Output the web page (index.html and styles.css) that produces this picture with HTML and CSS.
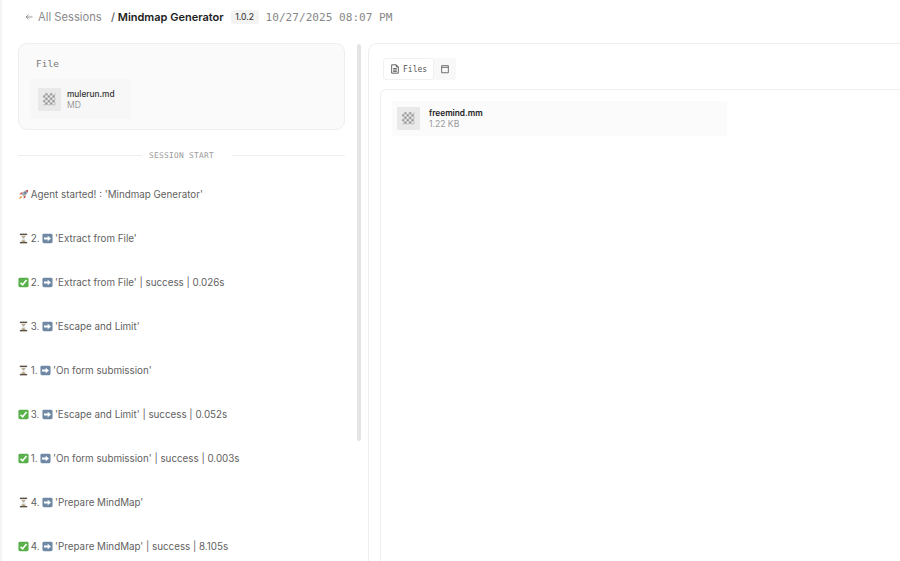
FILE: index.html
```html
<!DOCTYPE html>
<html lang="en">
<head>
<meta charset="utf-8">
<title>Mindmap Generator</title>
<link rel="stylesheet" href="styles.css">
</head>
<body>
<svg class="defs" width="0" height="0" aria-hidden="true">
  <defs>
    <pattern id="chk" width="5" height="5" patternUnits="userSpaceOnUse">
      <rect width="5" height="5" fill="#8f8f8f"/>
      <rect width="2.500" height="2.500" fill="#f5f5f5"/>
      <rect x="2.500" y="2.500" width="2.500" height="2.500" fill="#f5f5f5"/>
    </pattern>
    <symbol id="thumb" viewBox="0 0 24 24">
      <rect width="24" height="24" fill="#e9e9e9"/>
      <rect x="5.500" y="5.500" width="12.500" height="12.500" fill="url(#chk)"/>
    </symbol>
    <symbol id="rocket" viewBox="0 0 12 12">
      <path d="M11 1C8 1 5.500 2.500 3.800 5.600L6.400 8.200C9.500 6.500 11 4 11 1Z" fill="#a9adb8"/>
      <path d="M11 1C10 1 9 1.200 8.200 1.500L10.500 3.800C10.800 3 11 2 11 1Z" fill="#c9483e"/>
      <path d="M3.800 5.600L1.500 6L3 4C3.500 3.700 4.500 3.700 5 3.800Z" fill="#c9483e"/>
      <path d="M6.400 8.200L6 10.500L8 9C8.300 8.500 8.300 7.500 8.200 7Z" fill="#c9483e"/>
      <path d="M3.500 7.500C2.300 8 1.500 9.500 1 11C2.500 10.500 4 9.700 4.500 8.500Z" fill="#e9a13b"/>
      <circle cx="7.800" cy="4.200" r="1" fill="#4f6f8f"/>
    </symbol>
    <symbol id="hourglass" viewBox="0 0 12 12">
      <rect x="2" y=".7" width="8" height="1.500" fill="#5e5044"/>
      <rect x="2" y="9.800" width="8" height="1.500" fill="#5e5044"/>
      <path d="M3 2.200H9C9 4.200 7.300 5.300 6.700 6C7.300 6.700 9 7.800 9 9.800H3C3 7.800 4.700 6.700 5.300 6C4.700 5.300 3 4.200 3 2.200Z" fill="#dfe3e6"/>
      <path d="M4 3.500H8C7.600 4.600 6.500 5.200 6 5.800C5.500 5.200 4.400 4.600 4 3.500ZM3.800 9.800C4.200 8.600 5.300 8 6 7.600C6.700 8 7.800 8.600 8.200 9.800Z" fill="#b8a27e"/>
    </symbol>
    <symbol id="arrowbox" viewBox="0 0 12 12">
      <rect x=".5" y=".8" width="11" height="10.400" rx="1.600" fill="#6f88a3"/>
      <path d="M2.200 4.900H6.200V2.900L9.800 6L6.200 9.100V7.100H2.200Z" fill="#fff"/>
    </symbol>
    <symbol id="check" viewBox="0 0 12 12">
      <rect x=".5" y=".8" width="11" height="10.400" rx="1.600" fill="#58b04a"/>
      <path d="M2.800 6.200L5 8.500L9.300 3.300" fill="none" stroke="#fff" stroke-width="1.700"/>
    </symbol>
  </defs>
</svg>

<div class="page">
  <header class="topbar">
    <a class="back">
      <svg class="back-arrow" viewBox="0 0 8 8"><path d="M7.500 4H1M3.500 1.700L1 4L3.500 6.300" fill="none" stroke="#8a8a8a" stroke-width=".9"/></svg>
      All Sessions
    </a>
    <span class="crumb"><span class="slash">/</span> Mindmap Generator</span>
    <span class="version">1.0.2</span>
    <span class="stamp">10/27/2025 08:07 PM</span>
  </header>

  <main class="columns">
    <section class="left">
      <div class="input-card">
        <div class="card-label">File</div>
        <div class="attachment">
          <svg class="thumb"><use href="#thumb"/></svg>
          <div class="file-meta">
            <div class="file-name">mulerun.md</div>
            <div class="file-sub">MD</div>
          </div>
        </div>
      </div>
      <div class="divider"><span class="rule rule-left"></span><span class="divider-text">SESSION START</span><span class="rule"></span></div>
      <ul class="log">
        <li><svg class="emo"><use href="#rocket"/></svg> Agent started! : 'Mindmap Generator'</li>
        <li><svg class="emo"><use href="#hourglass"/></svg> 2. <svg class="emo"><use href="#arrowbox"/></svg> 'Extract from File'</li>
        <li><svg class="emo"><use href="#check"/></svg> 2. <svg class="emo"><use href="#arrowbox"/></svg> 'Extract from File' | success | 0.026s</li>
        <li><svg class="emo"><use href="#hourglass"/></svg> 3. <svg class="emo"><use href="#arrowbox"/></svg> 'Escape and Limit'</li>
        <li><svg class="emo"><use href="#hourglass"/></svg> 1. <svg class="emo"><use href="#arrowbox"/></svg> 'On form submission'</li>
        <li><svg class="emo"><use href="#check"/></svg> 3. <svg class="emo"><use href="#arrowbox"/></svg> 'Escape and Limit' | success | 0.052s</li>
        <li><svg class="emo"><use href="#check"/></svg> 1. <svg class="emo"><use href="#arrowbox"/></svg> 'On form submission' | success | 0.003s</li>
        <li><svg class="emo"><use href="#hourglass"/></svg> 4. <svg class="emo"><use href="#arrowbox"/></svg> 'Prepare MindMap'</li>
        <li><svg class="emo"><use href="#check"/></svg> 4. <svg class="emo"><use href="#arrowbox"/></svg> 'Prepare MindMap' | success | 8.105s</li>
      </ul>
    </section>

    <div class="scroll-track"><div class="scroll-thumb"></div></div>

    <section class="right">
      <div class="tabs">
        <button class="tab tab-active">
          <svg class="tab-icon" viewBox="0 0 12 12"><path d="M2 1H7.500L10 3.500V11H2ZM7.500 1V3.500H10M3.800 5.500H8.200M3.800 7.200H8.200M3.800 8.900H8.200" fill="none" stroke="#444" stroke-width="1"/></svg>
          Files
        </button>
        <button class="tab">
          <svg class="tab-icon" viewBox="0 0 12 12"><path d="M2 2H10V10.500H2ZM2 4H10" fill="none" stroke="#555" stroke-width="1"/></svg>
        </button>
      </div>
      <div class="files-panel">
        <div class="file-row">
          <svg class="thumb"><use href="#thumb"/></svg>
          <div class="file-meta">
            <div class="file-name strong">freemind.mm</div>
            <div class="file-sub">1.22 KB</div>
          </div>
        </div>
      </div>
    </section>
  </main>
</div>
</body>
</html>
```

FILE: styles.css
```css
* { box-sizing: border-box; }
html, body { margin: 0; height: 561px; overflow: hidden; background: #fff; }
body { font-family: Inter, "Liberation Sans", sans-serif; color: #555; }
.defs { position: absolute; }
.page {
  height: 561px;
  border-left: 2px solid #f4f4f4;
  display: flex;
  flex-direction: column;
}
.topbar {
  height: 34px;
  padding-left: 23px;
  display: flex;
  align-items: center;
}
.back {
  display: flex;
  align-items: center;
  gap: 5px;
  font-size: 11.2px;
  color: #8a8a8a;
  width: 86px;
}
.back-arrow { width: 8px; height: 8px; }
.crumb { font-size: 11px; font-weight: 600; color: #1c1c1c; }
.slash { font-weight: 400; color: #444; }
.version {
  margin-left: 7px;
  padding: 2px 4.500px;
  background: #f3f3f3;
  border-radius: 3px;
  font-size: 8.500px;
  font-weight: 500;
  color: #444;
}
.stamp {
  margin-left: 7px;
  font-family: "DejaVu Sans Mono", monospace;
  font-size: 11.1px;
  color: #888;
}
.columns {
  flex: 1;
  min-height: 0;
  padding: 9px 0 0 16px;
  display: flex;
  align-items: stretch;
}
.left {
  width: 327px;
  flex: none;
  overflow: hidden;
}
.input-card {
  height: 87px;
  background: #fafafa;
  border: 1px solid #eeeeee;
  border-radius: 9px;
  padding: 14px 11px 0 17px;
}
.card-label {
  font-family: "DejaVu Sans Mono", monospace;
  font-size: 9.500px;
  line-height: 12px;
  color: #777;
}
.attachment {
  margin: 9px 0 0 -6px;
  width: 101px;
  height: 40px;
  padding: 0 8px;
  display: flex;
  align-items: center;
  gap: 6px;
  background: #f7f7f7;
  border-radius: 4px;
}
.attachment .file-meta { padding-top: 2px; }
.thumb { width: 23px; height: 23px; flex: none; }
.file-meta { display: flex; flex-direction: column; }
.file-name { font-size: 8.300px; line-height: 11px; font-weight: 500; color: #333; }
.file-name.strong { font-weight: 600; color: #222; }
.file-sub { font-size: 8.600px; line-height: 11px; color: #999; }
.divider {
  margin-top: 20px;
  height: 10px;
  display: flex;
  align-items: center;
}
.rule { flex: 1; height: 1px; background: #efefef; }
.rule-left { flex: none; width: 124px; }
.divider-text {
  margin: 0 18px 0 7px;
  font-family: "DejaVu Sans Mono", monospace;
  font-size: 7.800px;
  letter-spacing: .3px;
  color: #999;
}
.log {
  list-style: none;
  margin: 28px 0 0;
  padding: 0;
  font-size: 9.800px;
  color: #5f5f5f;
}
.log li {
  height: 44px;
  line-height: 14px;
  white-space: nowrap;
}
.emo { width: 11px; height: 11px; margin-right: -1px; vertical-align: -1.500px; }
.scroll-track {
  flex: none;
  position: relative;
  width: 23px;
}
.scroll-thumb {
  position: absolute;
  left: 12px;
  top: 1px;
  width: 4px;
  height: 397px;
  background: #e4e4e4;
  border-radius: 2px;
}
.right {
  flex: 1;
  min-width: 0;
  border: 1px solid #eeeeee;
  border-right: 0;
  border-bottom: 0;
  border-radius: 9px 0 0 0;
  padding: 14px 0 0 11px;
  display: flex;
  flex-direction: column;
}
.tabs {
  display: flex;
  align-self: flex-start;
  margin-left: 3px;
  background: #f8f8f8;
  border-radius: 3px;
}
.tab {
  height: 22px;
  padding: 0 6px;
  display: flex;
  align-items: center;
  gap: 3px;
  background: none;
  border: 0;
  font-family: "DejaVu Sans Mono", monospace;
  font-size: 8px;
  color: #555;
}
.tab-active {
  background: #fff;
  border: 1px solid #f1f1f1;
  border-radius: 3px;
}
.tab-icon { width: 10px; height: 10px; }
.files-panel {
  flex: 1;
  margin-top: 9px;
  border: 1px solid #f0f0f0;
  border-right: 0;
  border-bottom: 0;
  border-radius: 6px 0 0 0;
  padding: 11px 0 0 11px;
}
.file-row {
  width: 335px;
  height: 35px;
  padding: 0 5px;
  display: flex;
  align-items: center;
  gap: 9px;
  background: #fbfbfb;
}
```
